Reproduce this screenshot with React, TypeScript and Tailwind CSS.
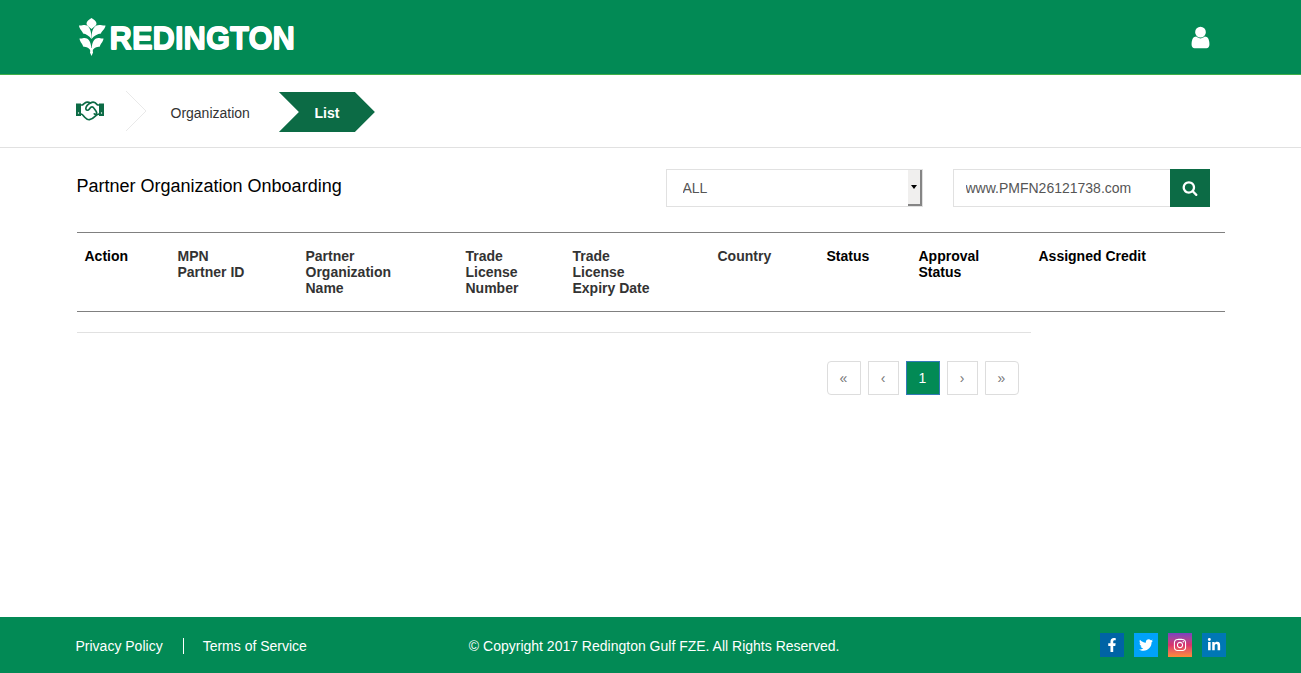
import { FaFacebookF, FaInstagram, FaLinkedinIn, FaTwitter } from "react-icons/fa";

const columns = [
  { lines: ["Action"], width: "w-[93px]", tone: "text-black" },
  { lines: ["MPN", "Partner ID"], width: "w-[128px]", tone: "text-[#333]" },
  { lines: ["Partner", "Organization", "Name"], width: "w-[160px]", tone: "text-[#333]" },
  { lines: ["Trade", "License", "Number"], width: "w-[107px]", tone: "text-[#333]" },
  { lines: ["Trade", "License", "Expiry Date"], width: "w-[145px]", tone: "text-[#333]" },
  { lines: ["Country"], width: "w-[109px]", tone: "text-[#333]" },
  { lines: ["Status"], width: "w-[92px]", tone: "text-black" },
  { lines: ["Approval", "Status"], width: "w-[120px]", tone: "text-black" },
  { lines: ["Assigned Credit"], width: "w-auto", tone: "text-black" },
];

const socials = [
  { name: "Facebook", Icon: FaFacebookF, bg: "bg-[#0063a5]" },
  { name: "Twitter", Icon: FaTwitter, bg: "bg-[#00a2f9]" },
  { name: "Instagram", Icon: FaInstagram, bg: "bg-linear-to-b from-[#7a3fc0] via-[#d9306c] to-[#fd8d32]" },
  { name: "LinkedIn", Icon: FaLinkedinIn, bg: "bg-[#0077b5]" },
];

const pages = [
  { label: "First page", text: "«", style: "w-[34px] rounded-l border-[#ddd] text-[#777]" },
  { label: "Previous page", text: "‹", style: "w-[31px] border-[#ddd] text-[#777]" },
  { label: "Page 1", text: "1", style: "w-[34px] border-[#337ab7] bg-[#028a55] text-white" },
  { label: "Next page", text: "›", style: "w-[31px] border-[#ddd] text-[#777]" },
  { label: "Last page", text: "»", style: "w-[34px] rounded-r border-[#ddd] text-[#777]" },
];

function Logo() {
  return (
    <a href="#" className="flex items-center gap-1 pl-[2px] text-white">
      <svg viewBox="0 0 27 38" className="h-[38px] w-[27px] fill-current" aria-hidden="true">
        <path d="M12.500 0C10 1.500 7.500 3.300 7.500 5.500C7.500 7.500 10 9 12.500 11C15 9 17.500 7.500 17.500 5.500C17.500 3.300 15 1.500 12.500 0Z" />
        <path d="M0 7.500C3 8 5 6 8 7.500C11 9.500 12.500 13.500 12.500 21C10 17.500 7 16 4 15.500C3.500 13 0.500 11.500 0 7.500Z" />
        <path d="M26.500 7.500C23.500 8 21 6 17.500 7.500C14 9.500 12.500 13.500 12.500 21C15 17.500 18.500 16 22 15.500C22.500 13 26 11.500 26.500 7.500Z" />
        <path d="M0.500 20.500C3.500 21 5 19 8 20.500C11 22.500 12.500 26 12.500 34C10.500 30 7.500 28.800 4 28.500C4 26 1 24.500 0.500 20.500Z" />
        <path d="M24.500 20.500C21.500 21 20 19 17 20.500C14 22.500 12.500 26 12.500 34C14.500 30 17.500 28.800 21 28.500C21 26 24 24.500 24.500 20.500Z" />
        <path d="M11.700 30H13.300L14 34.500L12.500 38L11 34.500Z" />
      </svg>
      <span className="pt-1 text-[31px] leading-8 font-bold [-webkit-text-stroke:1px_white] [text-shadow:0_1px_0_white,0_-1px_0_white]">
        REDINGTON
      </span>
    </a>
  );
}

export default function App() {
  return (
    <div className="flex min-h-screen flex-col bg-white font-['Liberation_Sans',Arial,sans-serif] text-sm text-[#333]">
      <header className="border-b border-[#3fae49] bg-[#028a55]">
        <div className="mx-auto flex h-[74px] max-w-[1148px] items-center justify-between pr-3">
          <Logo />
          <button type="button" aria-label="Account" className="text-white">
            <svg viewBox="0 0 1792 1792" className="size-[25px] fill-current" aria-hidden="true">
              <path d="M1536 1399q0 109-62.5 187t-150.5 78h-854q-88 0-150.5-78t-62.5-187q0-85 8.5-160.5t31.5-152 58.5-131 94-89 134.5-34.5q131 128 313 128t313-128q76 0 134.5 34.5t94 89 58.5 131 31.5 152 8.5 160.500zm-256-887q0 159-112.5 271.5t-271.5 112.5-271.5-112.5-112.5-271.5 112.5-271.5 271.5-112.5 271.5 112.5 112.5 271.500z" />
            </svg>
          </button>
        </div>
      </header>

      <nav aria-label="Breadcrumb" className="border-b border-[#e1e1e1]">
        <ol className="mx-auto flex h-[72px] max-w-[1150px] items-center">
          <li>
            <a href="#" aria-label="Partners" className="block text-[#0c6b45]">
              <svg viewBox="0 0 28 20" className="h-5 w-7" fill="none" stroke="currentColor" strokeWidth="1.700" strokeLinecap="round" strokeLinejoin="round" aria-hidden="true">
                <path d="M0 2.500H5V15H0ZM23 2.500H28V15H23Z" fill="currentColor" stroke="none" />
                <path d="M5 4H6.500C8 3 9 1.500 11 1.200C12.500 1 13.500 1.500 14.500 2C15.500 1.400 16.500 1 18 1.300C20 1.800 20.500 3.500 22 4H23" />
                <path d="M5 13C7 13.500 7.500 15 9 16.500C10.500 18 12 19 13.500 18.700C15.500 18.300 17.500 16.800 19 15.300C20.300 14 21.500 13.300 23 13" />
                <path d="M14.500 2C12.500 3 10 5 9.800 7.500C9.800 9.500 12 9.800 13.200 8.300C14 7.300 14.500 5.800 16 5.800C17.500 5.800 18 7.500 19 8.700C20 9.900 21.200 11.300 20.500 12.700C20 13.700 19 13.500 18.300 12.800" />
                <circle cx="2.500" cy="12" r="0.700" fill="white" stroke="none" />
                <circle cx="25.500" cy="12" r="0.700" fill="white" stroke="none" />
              </svg>
            </a>
          </li>
          <li aria-hidden="true" className="ml-[22px]">
            <svg viewBox="0 0 21 40" className="h-10 w-[21px]" fill="none" stroke="#e9e9e9">
              <path d="M0 0L20 20L0 40" />
            </svg>
          </li>
          <li className="ml-6 pt-1">
            <a href="#">Organization</a>
          </li>
          <li
            aria-current="page"
            className="mt-0.5 ml-[29px] flex h-10 w-24 items-center justify-center bg-[#0c6b45] pt-0.5 font-bold text-white [clip-path:polygon(0_0,76px_0,100%_50%,76px_100%,0_100%,20px_50%)]"
          >
            List
          </li>
        </ol>
      </nav>

      <main className="mx-auto w-full max-w-[1148px] flex-1 pt-[21px]">
        <div className="flex items-start">
          <h1 className="flex-1 pt-[5px] text-lg leading-6 text-black">Partner Organization Onboarding</h1>
          <div className="relative mr-[30px] w-[257px]">
            <select
              aria-label="Organization filter"
              defaultValue="ALL"
              className="block h-[38px] w-full appearance-none border border-[#e1e1e1] bg-white px-4 text-[#555]"
            >
              <option>ALL</option>
            </select>
            <span
              aria-hidden="true"
              className="pointer-events-none absolute inset-y-px right-px flex w-[14px] items-center justify-center border-r-2 border-b-2 border-[#858585] bg-[#f0efee]"
            >
              <span className="border-x-3 border-t-4 border-x-transparent border-t-black" />
            </span>
          </div>
          <form className="mr-[15px] flex w-[257px]" onSubmit={(event) => event.preventDefault()}>
            <input
              aria-label="Search organizations"
              defaultValue="www.PMFN26121738.com"
              className="h-[38px] min-w-0 flex-1 border border-r-0 border-[#e1e1e1] px-3 text-[#555]"
            />
            <button type="submit" aria-label="Search" className="flex h-[38px] w-10 items-center justify-center bg-[#0c6b45] text-white">
              <svg viewBox="0 0 1792 1792" className="size-4 fill-current" aria-hidden="true">
                <path d="M1216 832q0-185-131.5-316.5t-316.5-131.5-316.5 131.5-131.5 316.5 131.5 316.5 316.5 131.5 316.5-131.5 131.5-316.500zm512 832q0 52-38 90t-90 38q-54 0-90-38l-343-342q-179 124-399 124-143 0-273.5-55.5t-225-150-150-225-55.5-273.5 55.5-273.5 150-225 225-150 273.5-55.5 273.5 55.5 225 150 150 225 55.5 273.5q0 220-124 399l343 343q37 37 37 90z" />
              </svg>
            </button>
          </form>
        </div>

        <table className="mt-[25px] w-full table-fixed border-y border-[#808080] text-left">
          <thead>
            <tr>
              {columns.map((column) => (
                <th
                  key={column.lines.join(" ")}
                  scope="col"
                  className={`px-2 py-[15px] align-top leading-4 font-bold ${column.width} ${column.tone}`}
                >
                  {column.lines.map((line) => (
                    <span key={line} className="block">
                      {line}
                    </span>
                  ))}
                </th>
              ))}
            </tr>
          </thead>
        </table>

        <div className="mt-5 max-w-[954px] border-t border-[#e1e1e1] pt-7 pr-3">
          <nav aria-label="Pagination" className="flex justify-end gap-[7px]">
            {pages.map((page) => (
              <button
                key={page.label}
                type="button"
                aria-label={page.label}
                className={`h-[34px] border text-center ${page.style}`}
              >
                {page.text}
              </button>
            ))}
          </nav>
        </div>
      </main>

      <footer className="bg-[#028a55] text-white">
        <div className="mx-auto grid h-14 max-w-[1150px] grid-cols-3 items-center">
          <div className="flex items-center pt-0.5">
            <a href="#" className="border-r border-white pr-5 leading-4">
              Privacy Policy
            </a>
            <a href="#" className="pl-[19px] leading-4">
              Terms of Service
            </a>
          </div>
          <p className="pt-0.5 pl-[10px] whitespace-nowrap">© Copyright 2017 Redington Gulf FZE. All Rights Reserved.</p>
          <div className="flex justify-end gap-[10px]">
            {socials.map(({ name, Icon, bg }) => (
              <a key={name} href="#" aria-label={name} className={`flex size-6 items-center justify-center ${bg}`}>
                <Icon className="size-[14px]" />
              </a>
            ))}
          </div>
        </div>
      </footer>
    </div>
  );
}
